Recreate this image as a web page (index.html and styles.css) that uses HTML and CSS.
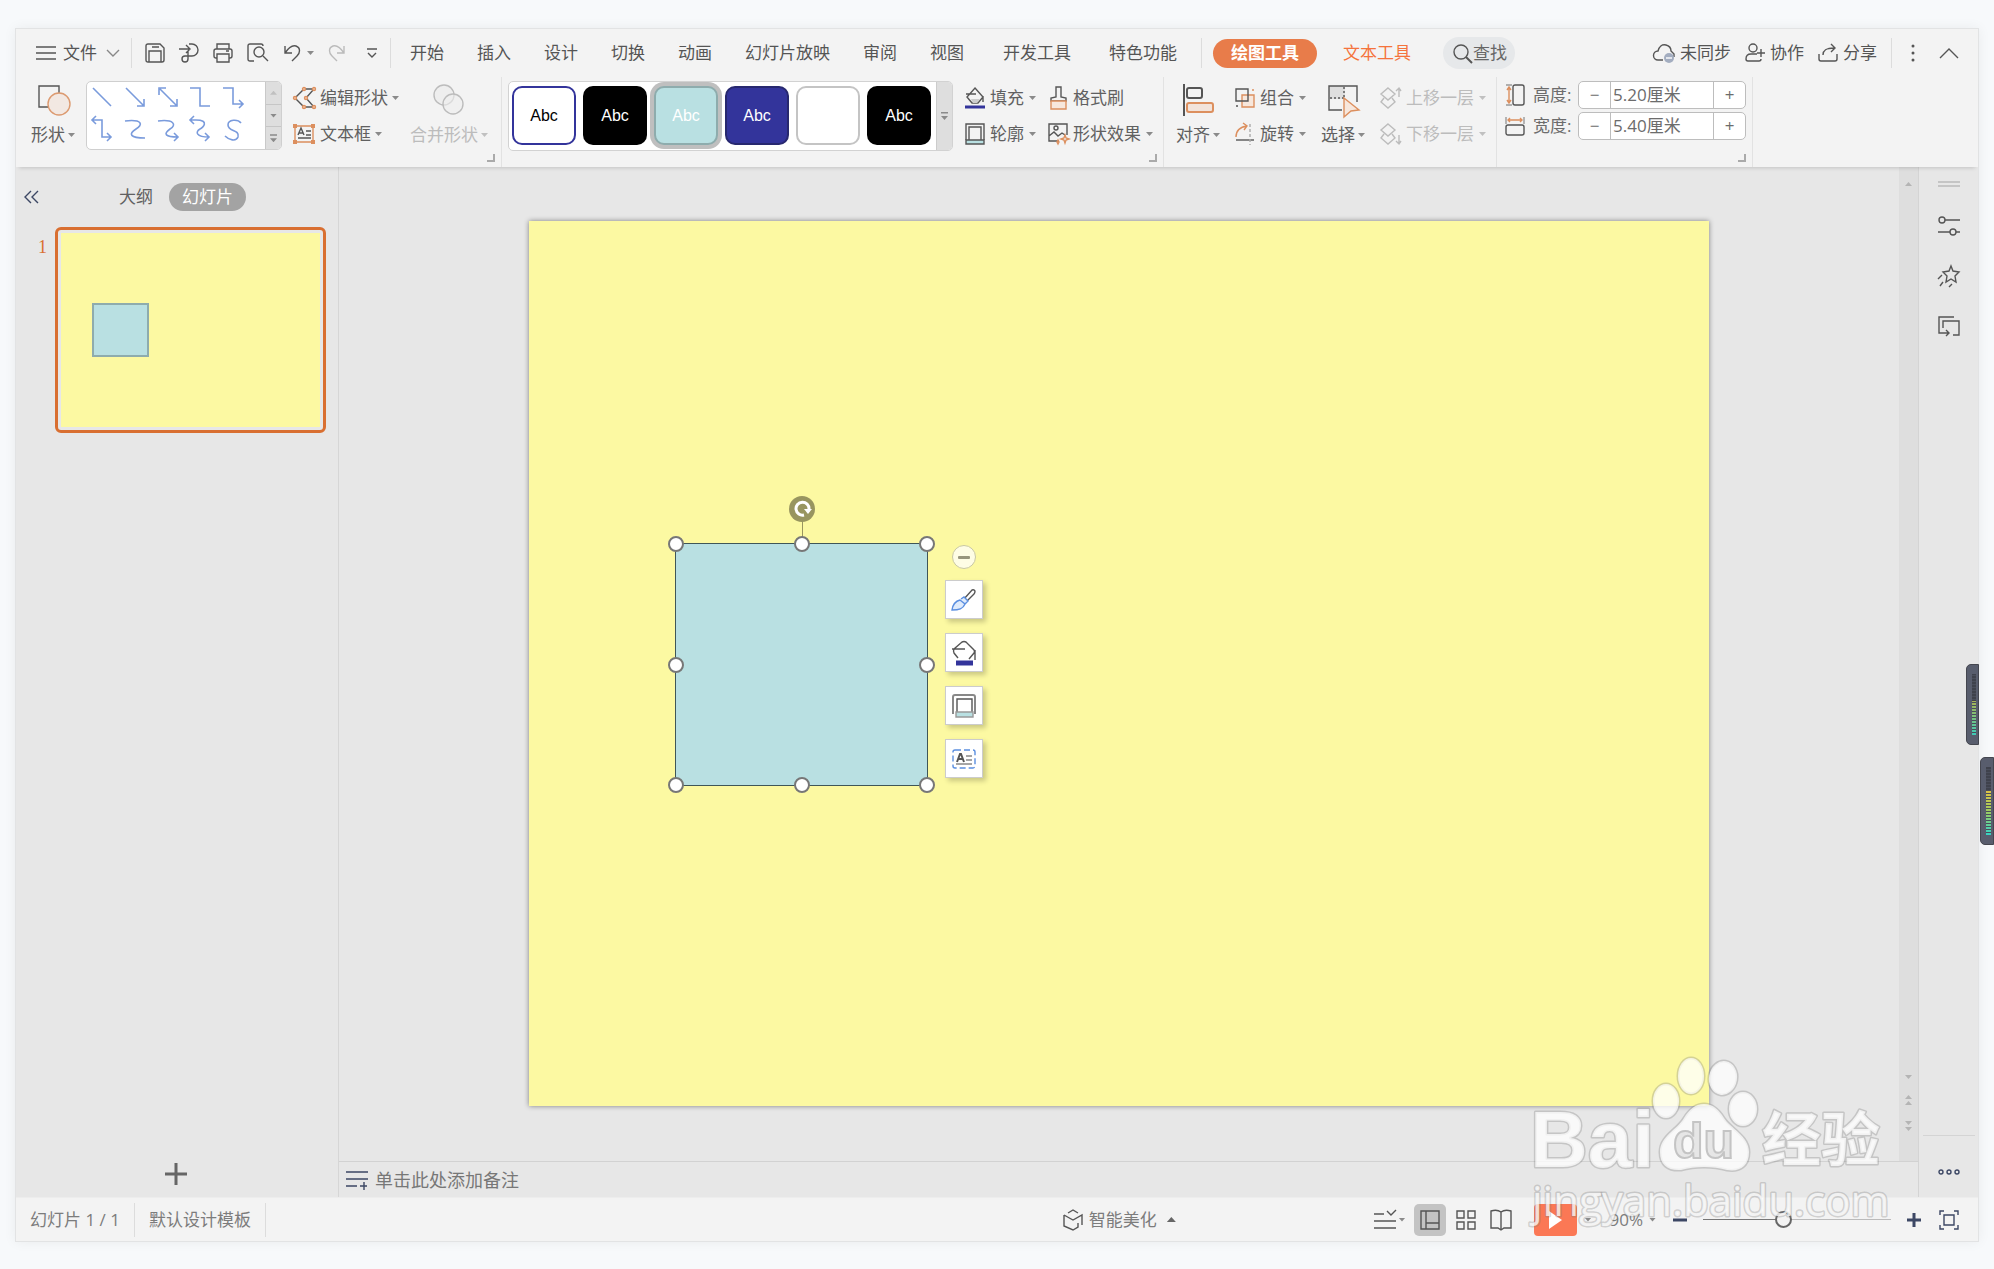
FILE: index.html
```html
<!DOCTYPE html>
<html lang="zh-CN">
<head>
<meta charset="utf-8">
<title>演示文稿</title>
<link rel="stylesheet" href="styles.css">
</head>
<body>
<div class="app">
  <header class="topbar">
    <button class="file"><svg width="20" height="16" class="ln"><path d="M0 2h20M0 8h20M0 14h20"/></svg>文件<svg width="14" height="8" class="ln soft"><path d="M1 1l6 6 6-6"/></svg></button>
    <span class="rule"></span>
    <div class="quick">
      <button aria-label="保存"><svg width="20" height="20" class="ln"><path d="M1 3q0-2 2-2h12l4 4v12q0 2-2 2H3q-2 0-2-2zM4 19V8h12v11M7 4h7"/></svg></button>
      <button aria-label="输出"><svg width="20" height="20" class="ln"><path d="M0 6h10M7 2l4 4-4 4M10 1h3a6 6 0 0 1 0 12H6a3 3 0 1 0 3 3V8"/></svg></button>
      <button aria-label="打印"><svg width="20" height="20" class="ln"><path d="M4 6V1h12v5M4 15H3q-2 0-2-2V8q0-2 2-2h14q2 0 2 2v5q0 2-2 2h-1M4 11h12v8H4zM13 8h3"/></svg></button>
      <button aria-label="打印预览"><svg width="21" height="20" class="ln"><path d="M7 18H3q-2 0-2-2V3q0-2 2-2h11q2 0 2 2M16 13l5 5"/><circle cx="12" cy="9" r="5"/></svg></button>
      <button class="undo" aria-label="撤销"><svg width="17" height="18" class="ln"><path d="M1 2v7h7M1 9C5 3 9 1 12 2c5 2 4 7 1 10l-5 5"/></svg><i class="caret"></i></button>
      <button aria-label="恢复"><svg width="17" height="18" class="ln off"><path d="M16 2v7H9M16 9C12 3 8 1 5 2c-5 2-4 7-1 10l5 5"/></svg></button>
      <button class="more" aria-label="更多"><svg width="10" height="10" class="ln"><path d="M0 1h10M1 5l4 4 4-4"/></svg></button>
    </div>
    <span class="rule"></span>
    <nav class="tabs">
      <button>开始</button><button>插入</button><button>设计</button><button>切换</button><button>动画</button><button>幻灯片放映</button><button>审阅</button><button>视图</button>
    </nav>
    <nav class="tabs extra"><button>开发工具</button><button>特色功能</button></nav>
    <span class="rule"></span>
    <nav class="tabs context"><button class="active">绘图工具</button><button class="hot">文本工具</button></nav>
    <button class="search"><svg width="20" height="21" class="ln"><circle cx="8" cy="9" r="7"/><path d="M13 14l6 6" stroke-width="2"/></svg>查找</button>
    <div class="account">
      <button><svg width="22" height="20" class="ln"><path d="M10 17H5a4 4 0 0 1 0-9c1-4 4-7 8-6s5 3 5 6l3 3v3"/><circle cx="16" cy="15" r="5" fill="#a3adc0" stroke="none"/><path d="M13 15h6" stroke="#fff"/></svg>未同步</button>
      <button><svg width="20" height="20" class="ln"><circle cx="8" cy="5" r="4"/><path d="M12 11H6q-5 0-5 5 0 2 2 2h11q2 0 2-2M12 10h8M16 6v8"/></svg>协作</button>
      <button><svg width="20" height="20" class="ln"><path d="M1 11v5q0 2 2 2h14q2 0 2-2v-5M5 12c0-5 3-7 11-7M13 1l4 4-4 4"/></svg>分享</button>
      <span class="rule"></span>
      <button class="dots" aria-label="菜单"><svg width="4" height="18" fill="#555"><circle cx="2" cy="2" r="1.500"/><circle cx="2" cy="9" r="1.500"/><circle cx="2" cy="16" r="1.500"/></svg></button>
      <button aria-label="收起功能区"><svg width="20" height="11" class="ln"><path d="M1 10l9-9 9 9"/></svg></button>
    </div>
  </header>

  <section class="ribbon">
    <div class="group">
      <button class="big"><svg width="36" height="34" class="ln"><path d="M4 3h20v21H4z"/><circle cx="24" cy="21" r="11" fill="#f2e8e2" stroke="#dc9a70"/></svg><span>形状<i class="caret"></i></span></button>
      <div class="shapes">
        <svg viewBox="0 0 178 67" width="178" height="67" class="conn">
          <path d="M6 6l18 18M39 6l18 18m0-7v7h-7M73 7l17 17m0-7v7h-7M79 6h-7v7M103 6h10v18h10M136 6h10v16h10m-4-4l4 4-4 4"/>
          <path d="M9 34l-4 4 4 4M6 38h9v17h9m-4-4l4 4-4 4M38 39c18-2 18 4 11 8-8 5-6 9 9 9M71 39c16-2 19 4 12 8-7 5-5 8 8 8m-4-4l4 4-4 4M107 34l-4 4 4 4M103 38h6c14 0 7 8 4 9-5 3-4 8 9 8m-4-4l4 4-4 4M154 41c-3-4-13-4-13 2 0 7 12 4 10 12-2 5-9 3-13-1"/>
        </svg>
        <div class="spin"><button aria-label="上"><i class="caret up off"></i></button><button aria-label="下"><i class="caret"></i></button><button aria-label="更多形状"><i class="caret bar"></i></button></div>
      </div>
      <div class="stack">
        <button class="tool"><svg width="23" height="22" class="ln"><path d="M11 2h10l-8 9 8 9H11L2 11z"/><g fill="#f7d9c6" stroke="#dc8f5e"><circle cx="11" cy="2" r="1.5"/><circle cx="21" cy="2" r="1.5"/><circle cx="13" cy="11" r="1.5"/><circle cx="2" cy="11" r="1.5"/><circle cx="11" cy="20" r="1.5"/><circle cx="21" cy="20" r="1.5"/></g></svg>编辑形状<i class="caret"></i></button>
        <button class="tool"><svg width="23" height="20" class="ln"><path d="M2 2h18v16H2z" stroke="#dc8f5e"/><path d="M5 11l3-7 3 7M6 9h4M13 7h5M13 11h5M5 14h13"/><g fill="#dc8f5e" stroke="none"><path d="M0 0h4v4H0zM18 0h4v4h-4zM0 16h4v4H0zM18 16h4v4h-4z"/></g></svg>文本框<i class="caret"></i></button>
      </div>
      <button class="big" disabled><svg width="34" height="34" class="ln"><g fill="#eee"><circle cx="12" cy="12" r="10"/><circle cx="21" cy="21" r="10" fill-opacity=".6"/></g></svg><span>合并形状<i class="caret"></i></span></button>
      <button class="launch" aria-label="形状设置"></button>
    </div>
    <div class="group styles">
      <div class="presets">
        <div class="tiles">
          <button class="tile t1">Abc</button><button class="tile t2">Abc</button><button class="tile t3">Abc</button><button class="tile t4">Abc</button><button class="tile t5" aria-label="白色"></button><button class="tile t2">Abc</button>
        </div>
        <button class="expand" aria-label="更多样式"><i class="caret bar"></i></button>
      </div>
      <div class="stack">
        <button class="tool"><svg width="20" height="22" class="ln"><path d="M10 1l8 9-5 6H7L2 10zM1 7h10M18 9v6" /><path d="M6 12h9l-3 4H8z" fill="#ccc" stroke="none"/><path d="M0 20h20" stroke="#33349b" stroke-width="3"/></svg>填充<i class="caret"></i></button>
        <button class="tool"><svg width="20" height="22" class="ln"><path d="M1 17V1h18v16M4 17V4h12v13"/><path d="M1 17h18v4H1z" fill="#b9e0e2"/></svg>轮廓<i class="caret"></i></button>
      </div>
      <div class="stack">
        <button class="tool"><svg width="20" height="24" class="ln"><path d="M8 1h5v10l5 1v3H3v-3l5-1z"/><path d="M3 15h15v8H3z" stroke="#dc8f5e" fill="#f7e7dc"/></svg>格式刷</button>
        <button class="tool"><svg width="20" height="22" class="ln"><path d="M11 18H1V1h18v11M1 13l5-4 4 4 4-3 3 2"/><circle cx="8" cy="5" r="2"/><path d="M17 12l1 3 3 1-3 1-1 3-1-3-3-1 3-1zM10 17l1 2-1 2-1-2z" stroke="#dc8f5e"/></svg>形状效果<i class="caret"></i></button>
      </div>
      <button class="launch" aria-label="样式设置"></button>
    </div>
    <div class="group arrange">
      <button class="big"><svg width="34" height="34" class="ln" stroke-width="2"><path d="M3 1v32"/><rect x="6" y="5" width="15" height="10" rx="2"/><rect x="6" y="20" width="26" height="9" rx="2" stroke="#dc8f5e" fill="#f2e3da"/></svg><span>对齐<i class="caret"></i></span></button>
      <div class="stack">
        <button class="tool"><svg width="20" height="20" class="ln"><path d="M7 7h12v12H7z" stroke="#dc8f5e" fill="#f7e7dc"/><path d="M1 1h12v12H1z"/><path d="M1 18h2" /><path d="M17 2h2" stroke="#dc8f5e"/></svg>组合<i class="caret"></i></button>
        <button class="tool"><svg width="20" height="22" class="ln"><path d="M1 14C1 8 5 4 12 3M8 0l4 3-3 4" stroke="#dc8f5e"/><path d="M1 17h18"/><path d="M15 1v21" stroke="#aaa" stroke-dasharray="3 2"/></svg>旋转<i class="caret"></i></button>
      </div>
      <button class="big"><svg width="34" height="34" class="ln"><path d="M3 3h16v13H3z" fill="#dedede" stroke="none"/><path d="M16 27H3V3h28v16"/><path d="M4 15h14M18 4v11" stroke-dasharray="2 2"/><path d="M18 15l15 12-8 1-7 6z" stroke="#dc8f5e" fill="#f7e7dc"/></svg><span>选择<i class="caret"></i></span></button>
      <div class="stack">
        <button class="tool" disabled><svg width="21" height="22" class="ln"><path d="M8 1l7 6-7 6-7-6zM4 11l-3 4 7 6 7-6-3-4M19 10V2m-3 2l3-3 2 3"/></svg>上移一层<i class="caret"></i></button>
        <button class="tool" disabled><svg width="21" height="22" class="ln"><path d="M8 1l7 6-7 6-7-6zM4 11l-3 4 7 6 7-6-3-4M19 12v8m-3-2l3 3 2-3"/></svg>下移一层<i class="caret"></i></button>
      </div>
    </div>
    <div class="group size">
      <div class="field"><svg width="20" height="22" class="ln"><rect x="8" y="1" width="11" height="20" rx="2"/><path d="M1 1h6M1 21h6" stroke="#999"/><path d="M4 4v14M2 6l2-3 2 3M2 16l2 3 2-3" stroke="#dc8f5e"/></svg><label for="h">高度:</label><div class="stepper"><button aria-label="减小高度">−</button><input id="h" value="5.20厘米"><button aria-label="增大高度">+</button></div></div>
      <div class="field"><svg width="20" height="20" class="ln"><rect x="1" y="9" width="18" height="10" rx="2"/><path d="M1 1v7M19 1v7" stroke="#999"/><path d="M3 4h14M5 2L3 4l2 2M15 2l2 2-2 2" stroke="#dc8f5e"/></svg><label for="w">宽度:</label><div class="stepper"><button aria-label="减小宽度">−</button><input id="w" value="5.40厘米"><button aria-label="增大宽度">+</button></div></div>
      <button class="launch" aria-label="大小设置"></button>
    </div>
  </section>

  <main class="work">
    <aside class="panel">
      <div class="panel-head">
        <button class="fold" aria-label="收起"><svg width="16" height="14" class="ln navy"><path d="M8 1L2 7l6 6M15 1L9 7l6 6"/></svg></button>
        <button>大纲</button><button class="chip">幻灯片</button>
      </div>
      <div class="thumb-row"><span class="num">1</span><div class="thumb"><div class="mini"><span class="mini-shape"></span></div></div></div>
      <button class="add" aria-label="新建幻灯片"><svg width="22" height="22" class="ln"><path d="M11 0v22M0 11h22" stroke-width="3" stroke="#666"/></svg></button>
    </aside>
    <section class="center">
      <div class="stage">
        <div class="slide">
          <div class="shape">
            <span class="stem"></span>
            <button class="rotate" aria-label="旋转"><svg width="26" height="26"><circle cx="13" cy="13" r="13" fill="#98955f"/><path d="M15 19a6.500 6.500 0 1 1 5-6" fill="none" stroke="#fff" stroke-width="3"/><path d="M15 13h8l-4 5z" fill="#fff"/></svg></button>
            <i class="grip nw"></i><i class="grip n"></i><i class="grip ne"></i><i class="grip w"></i><i class="grip e"></i><i class="grip sw"></i><i class="grip s"></i><i class="grip se"></i>
          </div>
          <div class="floats">
            <button class="minus" aria-label="收起工具"></button>
            <button class="fl" aria-label="样式"><svg width="26" height="24" class="ln"><path d="M13 11l8-9q2-1 3 1 0 2-1 3l-8 8"/><path d="M1 22c1-7 4-9 8-10l5 4c-2 5-6 6-13 6zM10 11l3-2 4 4-3 3" stroke="#5b8fe0" fill="#dfebfb"/></svg></button>
            <button class="fl" aria-label="填充"><svg width="26" height="24" class="ln"><path d="M7 17l-4-5q-1-2 0-4L11 1q2-1 4 0l8 8q1 2 0 3l-5 6M1 8h13M24 9v10"/><path d="M5 22h17" stroke="#33349b" stroke-width="5"/></svg></button>
            <button class="fl" aria-label="轮廓"><svg width="26" height="24" class="ln"><path d="M2 20V3q0-2 2-2h18q2 0 2 2v17" stroke="#888" stroke-width="2"/><path d="M6 19V5h15v14"/><path d="M5 18h17v5H5z" fill="#b9e0e2" stroke="#999"/></svg></button>
            <button class="fl" aria-label="文字"><svg width="26" height="24" class="ln"><rect x="2" y="3" width="22" height="18" rx="2" stroke="#5b8fe0" stroke-dasharray="6 3"/><path d="M6 15l3-8h1l3 8M7 12h5" stroke-width="2"/><path d="M15 9h6M15 13h6M5 17h16" stroke="#888"/></svg></button>
          </div>
        </div>
      </div>
      <div class="scroll"><i class="caret up"></i><span></span><i class="caret"></i><b><i class="caret up"></i><i class="caret up"></i></b><b><i class="caret"></i><i class="caret"></i></b></div>
      <div class="notes"><svg width="22" height="20" class="ln navy"><path d="M0 2h22M0 9h22M0 16h11M14 16h7M18 12v8"/></svg><input aria-label="备注" placeholder="单击此处添加备注"></div>
    </section>
    <aside class="rail">
      <svg width="22" height="6" class="ln off"><path d="M0 1h22M0 5h22"/></svg>
      <button aria-label="属性"><svg width="22" height="20" class="ln"><circle cx="4" cy="4" r="3"/><path d="M7 4h15M0 16h12M18 16h4"/><circle cx="15" cy="16" r="3"/></svg></button>
      <button aria-label="动画"><svg width="22" height="22" class="ln"><path d="M13 1l2 5 6 1-4 4 1 6-5-3-5 3 1-6-4-4 6-1zM0 14l4-4M2 21l3-4M11 22l3-3"/></svg></button>
      <button aria-label="切换"><svg width="22" height="21" class="ln"><path d="M16 1H1v16h10M8 14l3 3-3 3M5 12V5h16v14h-6"/></svg></button>
      <span class="rail-rule"></span>
      <button aria-label="更多"><svg width="22" height="6" class="ln navy"><circle cx="3" cy="3" r="2"/><circle cx="11" cy="3" r="2"/><circle cx="19" cy="3" r="2"/></svg></button>
    </aside>
  </main>

  <footer class="status">
    <div class="left"><span class="cell">幻灯片 1 / 1</span><span class="cell">默认设计模板</span></div>
    <button class="beauty"><svg width="20" height="22" class="ln"><path d="M5 4l5-3 5 3M1 6v11l9 4 5-3v-4M1 6l9 5 9-5v10"/></svg>智能美化<i class="caret up dark"></i></button>
    <div class="right">
      <button class="view-list" aria-label="备注"><svg width="22" height="20" class="ln"><path d="M0 4h10M13 1l4 4 5-5M0 11h22M0 18h22"/></svg><i class="caret"></i></button>
      <button class="view on" aria-label="普通视图"><svg width="20" height="20" class="ln"><path d="M1 1h18v18H1zM6 1v18M6 13h13"/></svg></button>
      <button class="view" aria-label="浏览视图"><svg width="20" height="20" class="ln"><path d="M1 1h7v7H1zM12 1h7v7h-7zM1 12h7v7H1zM12 12h7v7h-7z"/></svg></button>
      <button class="view" aria-label="阅读视图"><svg width="22" height="22" class="ln"><path d="M11 3q-4-3-10-1v17h7l3 2 3-2h7V2q-6-2-10 1v17"/></svg></button>
      <button class="play" aria-label="放映"><svg width="12" height="18" fill="#fff"><path d="M0 0l13 9L0 18z"/></svg></button><i class="caret"></i>
      <button class="pct">90%<i class="caret"></i></button>
      <div class="zoom"><button aria-label="缩小"><svg width="14" height="14" class="navy"><path d="M0 7h14" stroke-width="3"/></svg></button><input type="range" aria-label="缩放" min="0" max="100" value="42"><button aria-label="放大"><svg width="14" height="14" class="navy"><path d="M0 7h14M7 0v14" stroke-width="3"/></svg></button></div>
      <button class="fit" aria-label="适应窗口"><svg width="20" height="20" class="ln navy"><path d="M1 5V1h4M15 1h4v4M19 15v4h-4M5 19H1v-4M5 5h10v10H5z"/></svg></button>
    </div>
  </footer>
</div>

<div class="meter inner"><i></i></div>
<div class="meter outer"><i></i></div>

<svg class="mark" width="370" height="190" viewBox="0 0 370 190" aria-label="水印">
  <g class="pad"><ellipse cx="142" cy="50" rx="13" ry="17"/><ellipse cx="167" cy="25" rx="13" ry="18"/><ellipse cx="199" cy="27" rx="14" ry="17" transform="rotate(10 199 27)"/><ellipse cx="219" cy="58" rx="14" ry="17"/>
  <path d="M180 53c9 0 15 6 20 14 6 10 25 18 25 34 0 15-10 20-22 18-14-4-32-4-46 0-13 1-21-5-21-18 0-16 17-22 24-34 5-8 11-14 20-14z"/></g>
  <text class="du" x="149" y="107">du</text>
  <text class="pad bai" x="6" y="116">Bai</text>
  <text class="pad jy" x="238" y="110">经验</text>
  <text class="pad url" x="8" y="165">jingyan.baidu.com</text>
</svg>
</body>
</html>
```
FILE: styles.css
```css
* { box-sizing: border-box; }
body {
  margin: 0;
  padding: 28px 15px 27px;
  height: 100vh;
  position: relative;
  overflow: hidden;
  background: #f7f9fb;
  color: #606060;
  font: 17px/24px "Open Sans", "Noto Sans CJK SC", sans-serif;
}
button, input { font: inherit; color: inherit; border: 0; padding: 0; margin: 0; background: none; }
button { display: flex; align-items: center; justify-content: center; white-space: nowrap; }
svg { display: block; flex: none; overflow: visible; }
.ln { fill: none; stroke: #555; }
svg.ln:not([stroke-width]) { stroke-width: 1.4; }
.soft { stroke: #888; }
.off { stroke: #bbb; }
.navy { stroke: #3c4764; }
button:disabled { color: #bcbcbc; }
button:disabled .ln { stroke: #bcbcbc; }

.caret { display: block; flex: none; width: 7px; height: 4px; background: #8a8a8a; clip-path: polygon(0 0, 100% 0, 50% 100%); }
.caret.up { clip-path: polygon(50% 0, 100% 100%, 0 100%); }
.caret.off, button:disabled .caret { background: #c0c0c0; }
.caret.dark { width: 9px; height: 5px; background: #666; }
.caret.bar { height: 8px; clip-path: polygon(0 0, 100% 0, 100% 20%, 0 20%, 0 50%, 100% 50%, 50% 100%, 0 50%); }

.app {
  height: 100%;
  display: flex;
  flex-direction: column;
  border: 1px solid #e2e3e4;
  background: #f3f3f3;
  box-shadow: 0 0 12px rgba(0, 0, 0, .06);
}
.rule { width: 1px; height: 30px; background: #dcdcdc; flex: none; }

.topbar { display: flex; align-items: center; height: 48px; padding: 0 19px 0 20px; color: #555; flex: none; }
.file { gap: 7px; margin-right: 11px; }
.file svg:last-child { margin-left: 2px; }
.quick { display: flex; align-items: center; gap: 14px; padding: 0 13px; }
.undo { gap: 6px; margin-left: 2px; }
.more { margin: 0 0 0 8px; }
.tabs { display: flex; align-items: center; gap: 33px; padding-left: 19px; }
.tabs.extra { gap: 38px; padding: 0 24px 0 39px; }
.tabs.context { gap: 26px; padding: 0 32px 0 11px; }
.active { height: 29px; padding: 0 18px; border-radius: 15px; background: #e87c4a; color: #fff; font-weight: 700; }
.hot { color: #f5733c; }
.search { height: 32px; padding: 0 8px 0 10px; border-radius: 16px; background: #e6e8ea; color: #666; }
.account { display: flex; align-items: center; gap: 14px; margin-left: auto; }
.account button { gap: 5px; }
.dots { margin: 0 10px 0 5px; }

.ribbon { display: flex; height: 90px; flex: none; box-shadow: 0 4px 4px -3px rgba(0, 0, 0, .16); position: relative; }
.group { position: relative; display: flex; gap: 11px; padding: 4px 13px 0 15px; border-right: 1px solid #e2e2e2; }
.group.styles { gap: 12px; padding: 4px 10px 0 6px; }
.group.arrange { gap: 15px; padding: 4px 10px 0 12px; }
.stack { display: flex; flex-direction: column; gap: 8px; padding-top: 3px; }
.tool { height: 28px; gap: 5px; justify-content: flex-start; }
.group:first-child .tool { gap: 4px; }
.big { flex-direction: column; justify-content: flex-start; height: 68px; gap: 5px; padding-top: 2px; }
.big span { display: flex; align-items: center; gap: 3px; height: 26px; }
.launch { position: absolute; right: 6px; bottom: 5px; width: 8px; height: 8px; border-right: 2px solid #aaa; border-bottom: 2px solid #aaa; }

.shapes { display: flex; height: 69px; width: 196px; border: 1px solid #cfcfcf; border-radius: 5px; background: #fff; overflow: hidden; }
.conn { fill: none; stroke: #7a9bdc; stroke-width: 1.6; }
.spin { flex: 1; display: flex; flex-direction: column; background: #dedede; border-left: 1px solid #c9c9c9; }
.spin button { flex: 1; }
.spin button + button { border-top: 1px solid #c6c6c6; }

.presets { display: flex; height: 70px; border: 1px solid #d2d2d2; border-radius: 5px; background: #fff; }
.tiles { display: flex; gap: 7px; padding: 4px 5px 6px 3px; }
.tile { width: 64px; height: 59px; border-radius: 10px; font: 16px/20px "Liberation Sans", sans-serif; color: #fff; }
.t1 { border: 2px solid #33349b; color: #000; }
.t2 { background: #000; }
.t3 { background: #b9e0e2; border: 2px solid #8eacad; box-shadow: 0 0 0 4px #bfbfbf; }
.t4 { background: #33349b; border: 2px solid #27286f; }
.t5 { border: 2px solid #c4c4c4; }
.expand { width: 16px; background: #dedede; border-left: 1px solid #ccc; border-radius: 0 4px 4px 0; }

.group.size { flex-direction: column; gap: 3px; padding: 4px 6px 0 8px; }
.field { display: flex; align-items: center; height: 28px; gap: 8px; color: #6c6c6c; }
.field label { width: 37px; white-space: nowrap; }
.stepper { display: flex; width: 168px; height: 28px; border: 1px solid #bdbdbd; border-radius: 5px; background: #fff; }
.stepper button { width: 31px; }
.stepper input { flex: 1; min-width: 0; padding: 0 2px; border: solid #bdbdbd; border-width: 0 1px; }

.work { flex: 1; min-height: 0; display: flex; background: #e7e7e7; }
.panel { width: 323px; flex: none; display: flex; flex-direction: column; border-right: 1px solid #d6d6d6; }
.panel-head { display: flex; align-items: center; height: 60px; padding-left: 7px; }
.fold { margin-right: 80px; }
.chip { height: 28px; padding: 0 13px; margin-left: 16px; border-radius: 14px; background: #a3a3a3; color: #fff; }
.thumb-row { display: flex; padding-right: 12px; }
.num { width: 39px; padding: 8px 8px 0 0; text-align: right; color: #d96f31; font: 18px/24px "Liberation Serif", serif; }
.thumb { flex: 1; padding: 3px; border: 3px solid #d96f31; border-radius: 6px; background: #e7e7e7; }
.mini { position: relative; aspect-ratio: 4 / 3; background: #fcf9a2; }
.mini-shape { position: absolute; left: 12%; top: 36%; width: 22%; height: 28%; background: #b9e0e2; border: 2px solid #8eacad; }
.add { margin: auto auto 12px 149px; }

.center { flex: 1; min-width: 0; display: grid; grid-template: 1fr 36px / 1fr 20px; }
.stage { display: flex; justify-content: center; padding: 54px 0 55px; min-height: 0; }
.slide { position: relative; height: 100%; aspect-ratio: 4 / 3; background: #fcf9a2; box-shadow: 0 0 5px rgba(0, 0, 0, .45); }
.shape { position: absolute; left: 146px; top: 322px; width: 253px; height: 243px; background: #b9e0e2; border: 1px solid #3f5657; }
.grip { position: absolute; width: 16px; height: 16px; margin: -8px; border-radius: 50%; background: #fff; border: 2px solid #777; left: 0; top: 0; }
.n, .s { left: 50%; }
.ne, .e, .se { left: 100%; }
.w, .e { top: 50%; }
.sw, .s, .se { top: 100%; }
.stem { position: absolute; left: 50%; top: -26px; width: 1px; height: 26px; background: #98955f; }
.rotate { position: absolute; left: 50%; top: -48px; margin-left: -13px; }
.floats { position: absolute; left: 416px; top: 324px; display: flex; flex-direction: column; align-items: center; gap: 14px; }
.minus { width: 24px; height: 24px; border: 1px solid #c9c8a2; border-radius: 50%; background: #fefde5; margin-bottom: -3px; }
.minus::before { content: ""; width: 12px; height: 3px; background: #98967e; border-radius: 1px; }
.fl { width: 38px; height: 39px; border: 1px solid #ccc; background: #fff; box-shadow: 3px 3px 5px rgba(0, 0, 0, .2); }

.scroll { display: flex; flex-direction: column; align-items: center; background: #dedede; border-right: 1px solid #d4d4d4; padding: 15px 0 30px; gap: 16px; }
.scroll .caret { background: #b4b4b4; }
.scroll span { flex: 1; }
.scroll b { display: flex; flex-direction: column; gap: 2px; }
.notes { grid-column: 1 / -1; display: flex; align-items: center; gap: 7px; padding-left: 7px; border-top: 1px solid #d2d2d2; border-right: 1px solid #d4d4d4; color: #777; }
.notes input { flex: 1; font-size: 18px; }
.notes input::placeholder { color: #777; opacity: 1; }

.rail { width: 59px; flex: none; display: flex; flex-direction: column; align-items: center; padding-top: 14px; }
.rail button { height: 22px; margin-top: 28px; }
.rail-rule { width: 52px; height: 1px; background: #d4d4d4; margin-top: auto; }
.rail > .rail-rule + button { margin: 25px 0 14px; }

.status { height: 44px; flex: none; display: flex; align-items: center; border-top: 1px solid #ededed; color: #7c7c7c; }
.left { flex: 0 0 53%; display: flex; align-items: center; }
.cell { height: 34px; line-height: 34px; padding: 0 14px; border-right: 1px solid #dcdcdc; white-space: nowrap; }
.beauty { gap: 6px; margin-left: 7px; }
.beauty .caret { margin-left: 4px; }
.right { flex: 1; display: flex; align-items: center; justify-content: flex-end; padding-right: 19px; }
.view-list { gap: 3px; margin-right: 8px; }
.view { width: 32px; height: 32px; border-radius: 5px; margin-right: 4px; }
.view + .view { margin-right: 3px; }
.on { background: #c3c3c3; }
.play { width: 43px; height: 32px; margin: 0 8px 0 14px; border-radius: 4px; background: #fb7855; }
.pct { gap: 6px; margin: 0 17px 0 18px; }
.zoom { display: flex; align-items: center; gap: 16px; }
.zoom input { appearance: none; width: 188px; height: 18px; background: linear-gradient(90deg, #777 44%, #bbb 44%) center / 100% 1px no-repeat; }
.zoom input::-webkit-slider-thumb { appearance: none; width: 17px; height: 17px; border-radius: 50%; border: 2px solid #666; background: #f3f3f3; }
.fit { margin-left: 18px; }

.meter { position: absolute; width: 13px; height: 81px; padding: 9px 2px 9px 5px; border: 1px solid #44464f; border-radius: 5px 0 0 5px; background: #585d6d; }
.meter i { display: block; height: 100%; background: repeating-linear-gradient(0deg, transparent 0 2px, #4a4e5b 2px 3px), linear-gradient(#3f424c 44%, #a8b254 44%, #7bc27c 70%, #3fc9b8); }
.inner { right: 15px; top: 664px; }
.outer { right: 0; top: 757px; width: 14px; height: 88px; }
.outer i { background: repeating-linear-gradient(0deg, transparent 0 2px, #4a4e5b 2px 3px), linear-gradient(#3f424c 34%, #e0c243 34%, #9ccc5f 65%, #35d3c5); }

.mark { position: absolute; right: 100px; bottom: 28px; pointer-events: none; }
.pad { fill: rgba(255, 255, 255, .75); stroke: rgba(120, 120, 120, .3); stroke-width: 3; stroke-linejoin: round; paint-order: stroke; }
.bai { font: 700 80px "Liberation Sans", sans-serif; }
.du { font: 700 50px "Liberation Sans", sans-serif; fill: #e6e6e6; stroke: #c4c4c4; stroke-width: 2; }
.jy { font: 700 59px "Noto Sans CJK SC", sans-serif; }
.url { font: 400 42px "Open Sans", sans-serif; }
```
